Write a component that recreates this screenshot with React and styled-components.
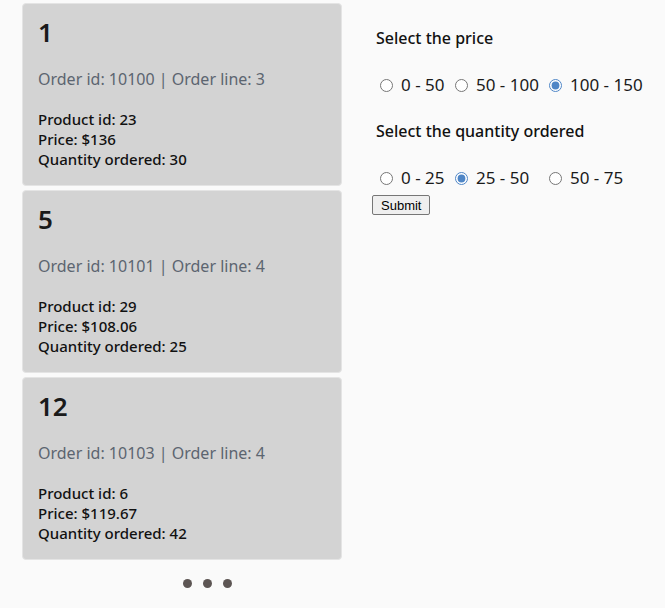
import React, { useState } from "react";
import styled, { createGlobalStyle } from "styled-components";

const GlobalStyle = createGlobalStyle`
  body {
    margin: 0;
    background: #fafafa;
    font-family: "Noto Sans", "Open Sans", sans-serif;
    color: #111;
  }
`;

const Page = styled.div`
  display: flex;
  align-items: flex-start;
  gap: 30px;
  padding: 3px 0 0 22px;
`;

const Column = styled.div`
  display: flex;
  flex-direction: column;
  align-items: center;
  width: 320px;
`;

const CardList = styled.div`
  display: flex;
  flex-direction: column;
  gap: 4px;
  width: 100%;
`;

const Card = styled.div`
  background: #d3d3d3;
  border: 1px solid #e4e4e4;
  border-radius: 4px;
  padding: 12px 15px 16px;
  height: 183px;
  box-sizing: border-box;
`;

const Num = styled.h2`
  margin: 0;
  font-size: 26px;
  font-weight: 600;
  line-height: 32px;
  color: #1a1a1a;
`;

const Meta = styled.p`
  margin: 21px 0 20px;
  font-size: 16px;
  line-height: 20px;
  color: #5c6570;
`;

const Line = styled.div`
  font-size: 15px;
  font-weight: 500;
  line-height: 20px;
`;

const Dots = styled.div`
  display: flex;
  gap: 11px;
  margin-top: 19px;
  margin-left: 50px;
`;

const Dot = styled.span`
  width: 9px;
  height: 9px;
  border-radius: 50%;
  background: #5d5654;
`;

const Filters = styled.form`
  display: flex;
  flex-direction: column;
  align-items: flex-start;
  padding-top: 24px;
`;

const Title = styled.h3`
  margin: 0 0 0 4px;
  font-size: 16px;
  font-weight: 500;
  line-height: 22px;
`;

const Options = styled.div`
  display: grid;
  grid-template-columns: 75px 94px auto;
  margin: 25px 0 ${(p) => p.$after}px;
`;

const Option = styled.label`
  display: flex;
  align-items: center;
  font-size: 17px;
  line-height: 22px;
  color: #1a1a1a;

  input {
    margin: 0 8px 0 8px;
    width: 13px;
    height: 13px;
    accent-color: #4f86c6;
  }
`;

const SubmitBtn = styled.button`
  font-family: "Liberation Sans", Arial, sans-serif;
  font-size: 13px;
  padding: 1px 8px;
  height: 20px;
  border: 1px solid #767676;
  border-radius: 2px;
  background: #efefef;
  color: #000;
`;

const orders = [
  { n: 1, order: 10100, line: 3, product: 23, price: "$136", qty: 30 },
  { n: 5, order: 10101, line: 4, product: 29, price: "$108.06", qty: 25 },
  { n: 12, order: 10103, line: 4, product: 6, price: "$119.67", qty: 42 },
];

export default function App() {
  const [price, setPrice] = useState("100-150");
  const [qty, setQty] = useState("25-50");

  return (
    <>
      <GlobalStyle />
      <Page>
        <Column>
          <CardList>
            {orders.map((o) => (
              <Card key={o.n}>
                <Num>{o.n}</Num>
                <Meta>
                  Order id: {o.order} | Order line: {o.line}
                </Meta>
                <Line>Product id: {o.product}</Line>
                <Line>Price: {o.price}</Line>
                <Line>Quantity ordered: {o.qty}</Line>
              </Card>
            ))}
          </CardList>
          <Dots>
            <Dot />
            <Dot />
            <Dot />
          </Dots>
        </Column>
        <Filters onSubmit={(e) => e.preventDefault()}>
          <Title>Select the price</Title>
          <Options $after={24}>
            {["0-50", "50-100", "100-150"].map((v) => (
              <Option key={v}>
                <input
                  type="radio"
                  name="price"
                  checked={price === v}
                  onChange={() => setPrice(v)}
                />
                {v.replace("-", " - ")}
              </Option>
            ))}
          </Options>
          <Title>Select the quantity ordered</Title>
          <Options $after={6}>
            {["0-25", "25-50", "50-75"].map((v) => (
              <Option key={v}>
                <input
                  type="radio"
                  name="qty"
                  checked={qty === v}
                  onChange={() => setQty(v)}
                />
                {v.replace("-", " - ")}
              </Option>
            ))}
          </Options>
          <SubmitBtn type="submit">Submit</SubmitBtn>
        </Filters>
      </Page>
    </>
  );
}
